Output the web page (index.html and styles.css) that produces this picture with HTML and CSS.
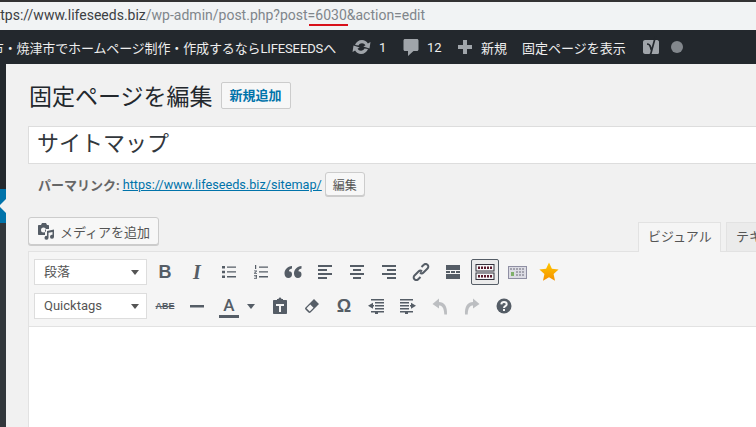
FILE: index.html

```html
<!DOCTYPE html>
<html lang="ja">
<head>
  <meta charset="UTF-8" />
  <title>固定ページを編集</title>
  <link rel="stylesheet" href="styles.css">
</head>
<body>
  <div class="url-bar">
    <span class="url-text"><span class="url-dark">https://www.lifeseeds.biz</span>/wp-admin/post.php?post=<span class="url-mark">6030</span>&amp;action=edit</span>
  </div>

  <div class="admin-bar">
    <div class="site-name"><span>藤枝市・焼津市でホームページ制作・作成するならLIFESEEDSへ</span></div>
    <svg class="ab-sync" width="20" height="20" viewBox="0 0 20 20"><path fill="#a0a5aa" d="M10 3c2.500 0 4.700 1.300 5.900 3.400L18.500 5l-1 6.500-6.200-2 2.200-1.200C12.700 7 11.400 6.300 10 6.300c-1.500 0-2.800.8-3.500 2.200L3 8C4 5.100 6.700 3 10 3zM1.500 8.500l6.200 2-2.200 1.200c.8 1.300 2.100 2 3.500 2 1.500 0 2.800-.8 3.500-2.200l3.500.5c-1 2.900-3.700 5-7 5-2.500 0-4.700-1.300-5.900-3.400L.5 15z"/></svg>
    <span class="ab-count">1</span>
    <svg class="ab-comment" width="16" height="20" viewBox="0 0 16 20"><path fill="#a0a5aa" d="M2 2h12c.8 0 1.500.7 1.500 1.500v9c0 .8-.7 1.500-1.500 1.500h-3.500L5 19v-5H2c-.8 0-1.500-.7-1.500-1.500v-9C.5 2.700 1.200 2 2 2z"/></svg>
    <span class="ab-count ab-count-wide">12</span>
    <svg class="ab-plus" width="14" height="14" viewBox="0 0 14 14"><path fill="#a0a5aa" d="M5 0h4v5h5v4H9v5H5V9H0V5h5z"/></svg>
    <span class="ab-new">新規</span>
    <span class="ab-view">固定ページを表示</span>
    <svg class="ab-yoast" width="18" height="22" viewBox="0 0 18 22">
      <path fill="#a0a5aa" d="M3 4h11.500c1 0 2.500.6 2.500 1.500v11c0 .9-.5 1.500-1.500 1.500H3c-1 0-2-.8-2-2V6c0-1.200 1-2 2-2z"/>
      <path fill="none" stroke="#23282d" stroke-width="1.700" d="M5 8c2 0 3 1 3.500 3l.8 3M13.500 .5L9 17c-.5 2-1.500 3.500-4 4"/>
    </svg>
    <span class="ab-dot"></span>
  </div>

  <div class="layout">
    <aside class="side-menu">
      <div class="side-current"></div>
    </aside>

    <main class="content">
      <div class="heading-row">
        <h1>固定ページを編集</h1>
        <a class="add-new">新規追加</a>
      </div>

      <div class="title-box">サイトマップ</div>

      <div class="permalink">
        <strong>パーマリンク:</strong>
        <a class="perma-link">https://www.lifeseeds.biz/sitemap/</a>
        <button class="btn btn-small">編集</button>
      </div>

      <div class="editor-tools">
        <button class="btn btn-media">
          <svg width="18" height="18" viewBox="0 0 18 18"><path fill="#555d66" d="M2 3h2l1-2h4l1 2h1c.6 0 1 .4 1 1v3H9.500C8.700 7 8 7.700 8 8.500V13H2c-.6 0-1-.4-1-1V4c0-.6.4-1 1-1zm4.500 2.500a2.500 2.500 0 1 0 0 5 2.500 2.500 0 0 0 0-5zM10 9l7-1.500v7.200a2 2 0 1 1-1.500-1.900V10l-4 .8v5a2 2 0 1 1-1.500-1.900z"/></svg>
          メディアを追加
        </button>
        <div class="tabs">
          <span class="tab tab-active">ビジュアル</span>
          <span class="tab">テキスト</span>
        </div>
      </div>

      <div class="editor">
        <div class="toolbar">
          <div class="tool-row">
            <div class="select">段落</div>
            <span class="tool tool-b">B</span>
            <span class="tool tool-i">I</span>
            <span class="tool"><svg width="16" height="16" viewBox="0 0 16 16"><path fill="#555d66" d="M1 2h3v2.500H1zM6 2.500h9v1.300H6zM1 6.800h3v2.500H1zM6 7.300h9v1.300H6zM1 11.500h3V14H1zM6 12.100h9v1.300H6z"/></svg></span>
            <span class="tool"><svg width="16" height="16" viewBox="0 0 16 16"><path fill="#555d66" d="M6 2.500h9v1.300H6zM6 7.300h9v1.300H6zM6 12.100h9v1.300H6zM2 1h1.200v4H2zM1 6.500h3v.8L2.300 9H4v.8H1V9l1.800-1.700H1zM1 11h3v3.800H1V14h2.200v-.8H1.500v-.7h1.700v-.7H1z"/></svg></span>
            <span class="tool"><svg width="18" height="14" viewBox="0 0 18 14"><path fill="#555d66" d="M8 1v2.500C5.800 4 5 5 5 6.200c2 0 3 1.200 3 3.200C8 11.500 6.500 13 4.500 13 2 13 .5 11.200.5 8.500.5 4.500 3.500 1.500 8 1zM17.500 1v2.500c-2.200.5-3 1.500-3 2.700 2 0 3 1.200 3 3.200 0 2.100-1.500 3.600-3.500 3.600-2.500 0-4-1.800-4-4.500 0-4 3-7 7.500-7.500z"/></svg></span>
            <span class="tool"><svg width="16" height="14" viewBox="0 0 16 14"><path fill="#555d66" d="M1 0h14v2H1zM1 4h9v2H1zM1 8h14v2H1zM1 12h9v2H1z"/></svg></span>
            <span class="tool"><svg width="16" height="14" viewBox="0 0 16 14"><path fill="#555d66" d="M1 0h14v2H1zM4 4h8v2H4zM1 8h14v2H1zM4 12h8v2H4z"/></svg></span>
            <span class="tool"><svg width="16" height="14" viewBox="0 0 16 14"><path fill="#555d66" d="M1 0h14v2H1zM6 4h9v2H6zM1 8h14v2H1zM6 12h9v2H6z"/></svg></span>
            <span class="tool"><svg width="18" height="18" viewBox="0 0 18 18"><g fill="none" stroke="#555d66" stroke-width="2"><path d="M8 9.500c1 1 2.500 1 3.500 0l4-4c1.100-1.100 1.100-2.700 0-3.700s-2.700-1-3.700 0L9.500 4"/><path d="M10 8.500c-1-1-2.500-1-3.500 0l-4 4c-1.100 1.100-1.100 2.700 0 3.700s2.700 1 3.700 0L8.500 14"/></g></svg></span>
            <span class="tool"><svg width="16" height="14" viewBox="0 0 16 14"><path fill="#555d66" d="M1 0h14v5H1zM1 6h4v2H1zM6 6h4v2H6zM11 6h4v2h-4zM1 9h14v5H1z"/></svg></span>
            <span class="tool tool-on"><svg width="20" height="16" viewBox="0 0 20 16"><rect x="1" y=".5" width="18" height="6.500" fill="#f6f6f6" stroke="#33333d"/><rect x="1" y="9" width="18" height="6.500" fill="#f6f6f6" stroke="#33333d"/><path stroke="#5a1a2c" stroke-width="2.500" stroke-dasharray="2 1" d="M3 3.700h14M3 12.200h14"/></svg></span>
            <span class="tool"><svg width="19" height="13" viewBox="0 0 19 13"><rect x=".5" y=".5" width="18" height="12" fill="#dcdce4" stroke="#8f8fa3"/><path stroke="#6a6a78" stroke-dasharray="2 1" d="M2 3h15M8 6h9M8 9h9"/><rect x="3" y="6" width="3" height="4" fill="#7fb06a"/></svg></span>
            <span class="tool"><svg width="20" height="20" viewBox="0 0 20 20"><defs><linearGradient id="star-fill" x1="0" y1="0" x2="0" y2="1"><stop offset="0" stop-color="#ffc800"/><stop offset="1" stop-color="#f59000"/></linearGradient></defs><path fill="url(#star-fill)" d="M10 .5l2.900 6.200 6.700.7-5 4.600 1.400 6.700-6-3.400-6 3.400 1.400-6.700-5-4.600 6.700-.7z"/></svg></span>
          </div>
          <div class="tool-row">
            <div class="select select-q">Quicktags</div>
            <span class="tool tool-abe">ABE</span>
            <span class="tool"><svg width="14" height="3" viewBox="0 0 14 3"><path fill="#555d66" d="M0 0h14v2.500H0z"/></svg></span>
            <span class="tool tool-color"><span class="color-a">A</span><span class="color-arrow"></span></span>
            <span class="tool"><svg width="16" height="18" viewBox="0 0 16 18"><path fill="#555d66" fill-rule="evenodd" d="M5 2h1.500C6.800 1 7.300.5 8 .5s1.200.5 1.500 1.500H11v1h3c.6 0 1 .4 1 1v12c0 .6-.4 1-1 1H2c-.6 0-1-.4-1-1V4c0-.6.400-1 1-1h3zM4 7v2h3v6h2V9h3V7z"/></svg></span>
            <span class="tool"><svg width="16" height="16" viewBox="0 0 16 16"><path fill="#555d66" fill-rule="evenodd" d="M10 1l5 5-8.500 8.500c-.6.600-1.400.6-2 0l-3-3c-.6-.6-.6-1.400 0-2zM6.300 6.500l-3.800 3.800 3.200 3.200 3.800-3.800z"/></svg></span>
            <span class="tool tool-omega">Ω</span>
            <span class="tool"><svg width="16" height="15" viewBox="0 0 16 15"><path fill="#555d66" d="M3 0h13v1.500H3zM7 3h9v1.500H7zM7 6h9v1.500H7zM7 9h9v1.500H7zM3 12h13v1.500H3zM7 13.500h3V15H7zM0 6.800l5-3v2.200h1v1.500H5v2.300z"/></svg></span>
            <span class="tool"><svg width="16" height="15" viewBox="0 0 16 15"><path fill="#555d66" d="M0 0h13v1.500H0zM0 3h9v1.500H0zM0 6h9v1.500H0zM0 9h9v1.500H0zM0 12h13v1.500H0zM5 13.500h3V15H5zM16 6.800l-5-3v2.200h-1v1.500h1v2.300z"/></svg></span>
            <span class="tool"><svg width="16" height="17" viewBox="0 0 16 17"><path fill="#bcbec1" d="M7 .5L.5 6 7 10.500V7.500c3 0 5 2 5.300 9h2.700C15.500 8 12 4 7 4z"/></svg></span>
            <span class="tool"><svg width="16" height="17" viewBox="0 0 16 17"><path fill="#bcbec1" d="M9 .5L15.500 6 9 10.500V7.500c-3 0-5 2-5.300 9H1C.5 8 4 4 9 4z"/></svg></span>
            <span class="tool"><svg width="16" height="16" viewBox="0 0 16 16"><circle cx="8" cy="8" r="7.500" fill="#555d66"/><path fill="none" stroke="#f5f5f5" stroke-width="2" d="M5.300 6.300C5.500 4.800 6.600 4 8 4c1.500 0 2.700.9 2.700 2.200 0 2-2.700 1.900-2.700 3.800"/><path fill="#f5f5f5" d="M7 11h2v2H7z"/></svg></span>
          </div>
        </div>
        <div class="edit-area"></div>
      </div>
    </main>
  </div>
</body>
</html>
```

FILE: styles.css

```css
html, body {
  margin: 0;
  padding: 0;
}
body {
  width: 756px;
  height: 427px;
  overflow: hidden;
  font-family: Roboto, "Noto Sans CJK JP", sans-serif;
  background: #f1f1f1;
  color: #444;
}

/* browser address bar */
.url-bar {
  height: 28px;
  border-top: 2px solid #333;
  background: #f1f3f4;
  color: #80868b;
  font-size: 14px;
  line-height: 27px;
  white-space: nowrap;
}
.url-text {
  display: block;
  margin-left: -12px;
}
.url-dark {
  color: #3c4043;
}
.url-mark {
  position: relative;
}
.url-mark::after {
  content: "";
  position: absolute;
  left: -6px;
  right: -1px;
  bottom: -3px;
  height: 2px;
  background: #d8101a;
}

/* wp admin bar */
.admin-bar {
  height: 34px;
  background: #23282d;
  color: #eee;
  font-size: 13px;
  display: flex;
  align-items: center;
  white-space: nowrap;
}
.site-name {
  width: 336px;
  flex: none;
  display: flex;
  justify-content: flex-end;
  overflow: hidden;
  letter-spacing: -0.13px;
}
.site-name span {
  flex: none;
}
.ab-sync {
  margin-left: 16px;
}
.ab-count {
  margin-left: 7px;
  width: 6px;
}
.ab-comment {
  margin-left: 18px;
}
.ab-count-wide {
  margin-left: 8px;
  width: 12px;
}
.ab-plus {
  margin-left: 19px;
}
.ab-new {
  margin-left: 9px;
}
.ab-view {
  margin-left: 15px;
}
.ab-yoast {
  margin-left: 16px;
}
.ab-dot {
  width: 12px;
  height: 12px;
  margin-left: 11px;
  border-radius: 50%;
  background: #82878c;
}

.layout {
  display: flex;
  height: 363px;
}
.side-menu {
  width: 6px;
  flex: none;
  background: linear-gradient(#23282d 125px, #32373c 125px);
  padding-top: 125px;
  box-sizing: border-box;
}
.side-current {
  position: relative;
  height: 34px;
  background: #0073aa;
}
.side-current::after {
  content: "";
  position: absolute;
  right: 0;
  top: 10px;
  border: 7px solid transparent;
  border-left-width: 0;
  border-right-color: #f1f1f1;
}

.content {
  flex: none;
  width: 800px;
  padding-left: 22px;
  box-sizing: border-box;
}

.heading-row {
  display: flex;
  align-items: center;
  height: 62px;
}
.heading-row h1 {
  margin: 0 0 0 1px;
  font-size: 23px;
  font-weight: 400;
  color: #23282d;
}
.add-new {
  margin-left: 8px;
  width: 70px;
  height: 27px;
  box-sizing: border-box;
  border: 1px solid #ccc;
  border-radius: 2px;
  background: #f7f7f7;
  color: #0073aa;
  font-size: 13px;
  font-weight: 700;
  line-height: 25px;
  text-align: center;
}

.title-box {
  height: 38px;
  box-sizing: border-box;
  border: 1px solid #ddd;
  background: #fff;
  color: #32373c;
  font-size: 22px;
  line-height: 33px;
  padding-left: 8px;
}

.permalink {
  display: flex;
  align-items: center;
  height: 24px;
  margin-top: 8px;
  padding-left: 10px;
  font-size: 13px;
  color: #666;
}
.permalink strong {
  font-weight: 700;
}
.perma-link {
  margin-left: 3px;
  color: #0073aa;
  font-size: 12.7px;
  text-decoration: underline;
}
.btn {
  box-sizing: border-box;
  border: 1px solid #ccc;
  border-radius: 3px;
  background: #f7f7f7;
  box-shadow: 0 1px 0 #ccc;
  color: #555;
  font-family: inherit;
  padding: 0;
}
.btn-small {
  margin-left: 3px;
  width: 40px;
  height: 24px;
  font-size: 12px;
}

.editor-tools {
  display: flex;
  align-items: flex-end;
  height: 35px;
  margin-top: 20px;
}
.btn-media {
  flex: none;
  display: flex;
  align-items: center;
  justify-content: center;
  gap: 5px;
  width: 131px;
  height: 28px;
  margin-bottom: 6px;
  font-size: 13px;
}
.tabs {
  display: flex;
  flex: none;
  gap: 5px;
  margin-left: 479px;
}
.tab {
  flex: none;
  box-sizing: border-box;
  width: 83px;
  height: 29px;
  padding-left: 9px;
  border: 1px solid #e2e2e2;
  border-bottom: 0;
  background: #ebebeb;
  color: #555;
  font-size: 13px;
  line-height: 28px;
}
.tab-active {
  background: #f5f5f5;
  margin-bottom: -1px;
  height: 30px;
  position: relative;
}

.editor {
  border: 1px solid #e2e2e2;
  background: #fff;
}
.toolbar {
  background: #f5f5f5;
  border-bottom: 1px solid #e2e2e2;
  padding: 7px 5px;
  display: flex;
  flex-direction: column;
  gap: 8px;
}
.tool-row {
  display: flex;
  align-items: center;
  height: 26px;
}
.select {
  position: relative;
  flex: none;
  box-sizing: border-box;
  width: 113px;
  height: 26px;
  margin-right: 2px;
  border: 1px solid #ddd;
  background: #fff;
  color: #555;
  font-size: 13px;
  line-height: 24px;
  padding-left: 9px;
}
.select::after {
  content: "";
  position: absolute;
  right: 7px;
  top: 10px;
  border: 4px solid transparent;
  border-top: 5px solid #555;
  border-bottom: 0;
}
.tool {
  flex: none;
  box-sizing: border-box;
  width: 32px;
  height: 26px;
  display: flex;
  align-items: center;
  justify-content: center;
  color: #555d66;
}
.tool-b {
  font-family: "Liberation Sans", sans-serif;
  font-size: 18px;
  font-weight: 700;
}
.tool-i {
  font-family: "Liberation Serif", serif;
  font-size: 20px;
  font-weight: 700;
  font-style: italic;
}
.tool-on {
  width: 28px;
  margin: 0 2px;
  border: 1px solid #555d66;
  border-radius: 2px;
  background: #ebebeb;
}
.tool-abe {
  font-family: "Liberation Sans", sans-serif;
  font-size: 9px;
  font-weight: 700;
  text-decoration: line-through;
}
.tool-color {
  width: 51px;
  justify-content: flex-start;
  padding-left: 6px;
}
.color-a {
  width: 20px;
  border-bottom: 3px solid #555d66;
  font-size: 17px;
  font-weight: 500;
  line-height: 20px;
  text-align: center;
}
.color-arrow {
  margin-left: 8px;
  border: 4px solid transparent;
  border-top: 5px solid #555d66;
  border-bottom: 0;
}
.tool-omega {
  font-family: "Liberation Sans", sans-serif;
  font-size: 18px;
  font-weight: 700;
}
.edit-area {
  height: 110px;
}
```
